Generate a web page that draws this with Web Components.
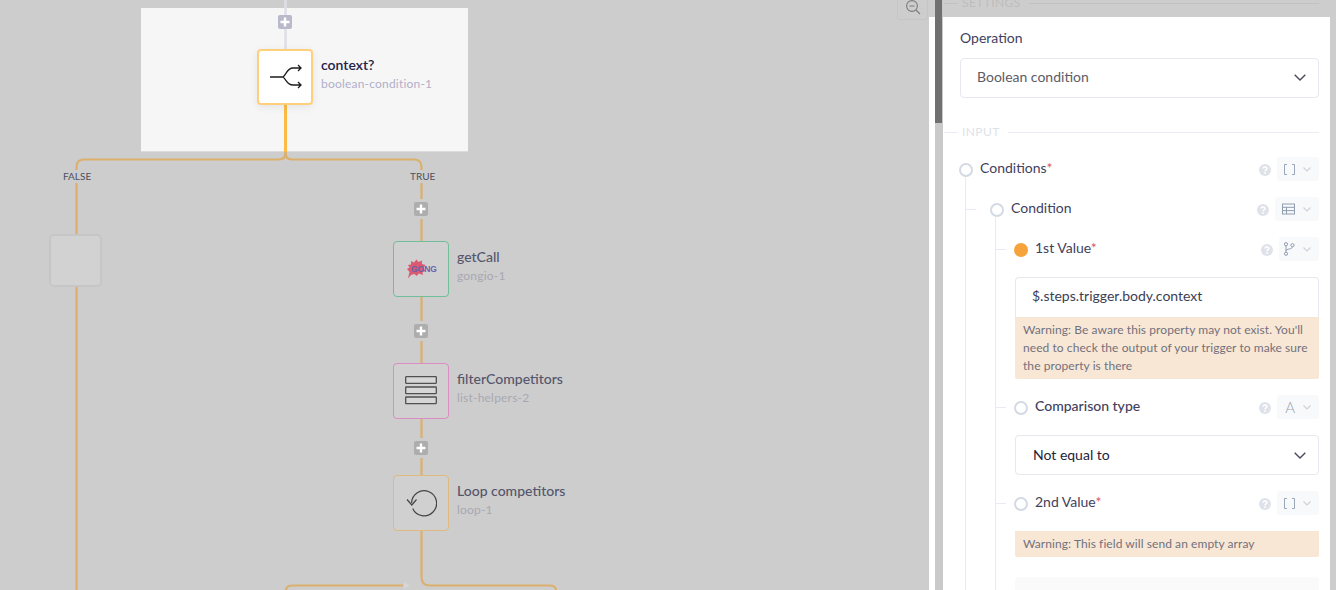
<!DOCTYPE html>
<html><head><meta charset="utf-8"><style>
html,body{margin:0;padding:0;height:100%;overflow:hidden}
body{font-family:"Lato","Noto Sans",sans-serif;background:#cdcdcd}
app-shell{width:1336px;height:590px}
</style></head><body>
<app-shell>
  <flow-canvas slot="canvas">
    <flow-node style="left:257px;top:49px" name="context?" sub="boolean-condition-1" active border="#ffcf7c">
      <svg width="36" height="30" viewBox="0 0 36 30" fill="none" stroke="#1d1d1d" stroke-width="1.3"><path d="M3 15H16M16 15C19 13 20 6 26 6H34M31 3l3 3-3 3M16 15C19 17 20 23 26 23H34M31 20l3 3-3 3"/></svg>
    </flow-node>
    <flow-node style="left:393px;top:241px" name="getCall" sub="gongio-1" border="#70bf99">
      <span style="position:relative;display:block;width:30px;height:20px">
        <svg width="19" height="20" viewBox="0 0 19 20" style="position:absolute;left:1px;top:0"><path d="M1 6L4 5.500 4 2 7 3.500 9.500 .5 11.500 3 15 1.500 15 5 18.500 6 16.500 9 18.500 12 15.500 13 16 16 12 14.500 9.500 17 7.500 15 4 16 1 19.500 2.500 13 0 10 2.500 8.500Z" fill="#db5a73"/></svg>
        <span style="position:absolute;left:5px;top:3px;font:800 8.5px/14px 'Liberation Sans',sans-serif;color:#6a62a8">GONG</span>
      </span>
    </flow-node>
    <flow-node style="left:393px;top:363px" name="filterCompetitors" sub="list-helpers-2" border="#d98dc2">
      <svg width="32" height="30" viewBox="0 0 32 30" fill="#d6d6d6" stroke="#505050" stroke-width="1.3"><rect x=".7" y="0.700" width="30.600" height="6.600" rx=".5"/><rect x="0.700" y="11" width="30.600" height="6.600" rx=".5"/><rect x=".7" y="21" width="30.600" height="6.600" rx=".5"/></svg>
    </flow-node>
    <flow-node style="left:393px;top:475px" name="Loop competitors" sub="loop-1" border="#dfb97e">
      <svg width="32" height="30" viewBox="0 0 32 30" fill="none" stroke="#444" stroke-width="1.2"><path d="M6.600 15A12.500 12.500 0 1 1 7.700 20.400"/><path d="M2 11.500L6.800 17 11.500 11.500"/></svg>
    </flow-node>
    <empty-slot style="left:49px;top:234px"></empty-slot>
    <add-button style="left:278px;top:15px" tone="#b9b9cb"></add-button>
    <add-button style="left:414px;top:202px"></add-button>
    <add-button style="left:414px;top:324px"></add-button>
    <add-button style="left:414px;top:441px"></add-button>
    <branch-label style="left:63px;top:170px">FALSE</branch-label>
    <branch-label style="left:410px;top:170px">TRUE</branch-label>
    <zoom-control style="left:897px;top:-10px"></zoom-control>
  </flow-canvas>

  <side-panel slot="panel">
    <section-title slot="header" dim>SETTINGS</section-title>
    <form-label>Operation</form-label>
    <form-select style="margin-top:10px;color:#5b5b66;padding-bottom:2px">Boolean condition</form-select>
    <section-title style="margin-top:27px">INPUT</section-title>
    <field-row style="margin:18px 0 0 -1px" icon="array" btn="42">Conditions<req-mark></req-mark></field-row>
    <tree-group>
      <field-row tick="-24" icon="table" btn="44">Condition</field-row>
      <tree-group inner>
        <field-row tick="-18" state="on" icon="branch" btn="40" style="margin-left:-1px">1st Value<req-mark></req-mark></field-row>
        <div>
          <form-input>$.steps.trigger.body.context</form-input>
          <warn-box>Warning: Be aware this property may not exist. You'll need to check the output of your trigger to make sure the property is there</warn-box>
        </div>
        <field-row tick="-18" icon="text" btn="42" strong style="margin-left:-1px">Comparison type</field-row>
        <form-select style="color:#22233a;padding-left:17px">Not equal to</form-select>
        <field-row tick="-18" icon="array" btn="42" style="margin-left:-1px">2nd Value<req-mark></req-mark></field-row>
        <warn-box>Warning: This field will send an empty array</warn-box>
        <empty-block style="margin-top:4px"></empty-block>
      </tree-group>
    </tree-group>
  </side-panel>
</app-shell>
<script>
function def(name, html){
  customElements.define(name, class extends HTMLElement{
    constructor(){super();this.attachShadow({mode:'open'});}
    connectedCallback(){
      if(this._done)return;this._done=1;
      this.shadowRoot.innerHTML = typeof html==='function'?html(this):html;
    }
  });
}
def('app-shell',`<style>:host{display:flex;width:1336px;height:590px;overflow:hidden}
::slotted([slot=canvas]){flex:0 0 929px}::slotted([slot=panel]){flex:0 0 407px}</style>
<slot name="canvas"></slot><slot name="panel"></slot>`);

def('flow-canvas',`<style>:host{display:block;position:relative;height:590px;background:#cdcdcd;overflow:visible}
.hl{position:absolute;left:141px;top:8px;width:327px;height:143px;background:#f6f6f6;box-shadow:0 1px 0 #dcdcdc}
svg{position:absolute;left:0;top:0}</style>
<div class="hl"></div>
<svg width="929" height="590" fill="none" stroke-width="2.2" stroke="#dcb06c">
<path d="M285.5 0V15M285.5 29V49" stroke="#dfdfe7" stroke-width="2.6"/>
<path d="M285.500 151V153Q285.500 159.500 279 159.500H84Q76.500 159.500 76.500 167V170M76.500 183V235M76.500 287V590"/>
<path d="M285.500 151V153Q285.500 159.500 292 159.500H414Q421.500 159.500 421.500 167V170M421.500 183V199M421.500 219V241M421.500 297V321M421.500 341V363M421.500 419V438M421.500 458V475M421.500 531V577Q421.500 585.500 430 585.500H549Q556 585.500 556 590"/>
<path d="M286 590Q286 585.500 293 585.500H403"/>
<path d="M285.500 105V152" stroke="#fbbb45" stroke-width="3"/>
<path d="M404 582L410 585.500 404 589Z" fill="#d6d6d6" stroke="none"/>
</svg><slot></slot>`);

def('flow-node', el=>{
  const active=el.hasAttribute('active');
  return `<style>:host{position:absolute;display:flex;gap:8px;align-items:center;white-space:nowrap}
.box{box-sizing:border-box;width:56px;height:56px;display:flex;align-items:center;justify-content:center;border-radius:4px;
 border:${active?2:1}px solid ${el.getAttribute('border')};background:${active?'#fff':'#d0d0d0'};${active?'box-shadow:0 2px 8px rgba(0,0,0,.08);':''}}
.t{margin-top:-7px;display:flex;flex-direction:column}
.n{font-size:14px;line-height:19px;color:${active?'#23234a':'#55566c'};font-weight:${active?600:500}}
.s{font-size:12px;line-height:19px;letter-spacing:.2px;color:${active?'#b1afca':'#a8a8b2'}}</style>
<div class="box"><slot></slot></div><div class="t"><div class="n">${el.getAttribute('name')}</div><div class="s">${el.getAttribute('sub')}</div></div>`});

def('empty-slot',`<style>:host{position:absolute;box-sizing:border-box;width:53px;height:53px;border:2px solid #c6c6c6;border-radius:5px;background:#d2d2d2}</style>`);

def('add-button', el=>`<style>:host{position:absolute;width:14px;height:14px;border-radius:2px;background:${el.getAttribute('tone')||'#adadad'};display:flex}</style>
<svg width="14" height="14" viewBox="0 0 14 14"><path d="M7 2.500V11.500M2.500 7H11.500" stroke="#fff" stroke-width="2.400" fill="none"/></svg>`);

def('branch-label',`<style>:host{position:absolute;font-size:10px;line-height:13px;color:#4f5060}</style><slot></slot>`);

def('zoom-control',`<style>:host{position:absolute;box-sizing:border-box;width:31px;height:30px;border:1px solid #c5c5c5;border-radius:3px;display:block}
svg{position:absolute;left:6px;top:8px}</style>
<svg width="18" height="18" viewBox="0 0 18 18" fill="none" stroke="#7c7c7c" stroke-width="1.1"><circle cx="8" cy="7" r="5.400"/><path d="M5.500 7H10.500M12 11L16 15"/></svg>`);

def('side-panel',`<style>:host{display:block;position:relative;height:590px;background:#cdcdcd;overflow:hidden}
.top{height:17px;overflow:hidden;box-sizing:border-box;padding:0 17px 0 31px}
.top ::slotted(*){margin-top:-4px}
.body{background:#fff;margin-right:6px;height:573px;box-sizing:border-box;padding:11px 11px 0 31px;overflow:hidden}
.track{position:absolute;left:6px;top:0;width:8px;height:590px;background:#c9c9c9}
.thumb{position:absolute;left:6px;top:0;width:7px;height:123px;background:#707070}</style>
<div class="top"><slot name="header"></slot></div>
<div class="body"><slot></slot></div>
<div class="track"></div><div class="thumb"></div>`);

def('section-title', el=>{const d=el.hasAttribute('dim');const c=d?'#c2c2c2':'#e9edf3';
 return `<style>:host{display:flex;align-items:center;margin-left:-16px;height:14px;font-size:12px;letter-spacing:.4px;color:${d?'#bdbdbd':'#dde2e9'}}
 i{height:1px;background:${c}}i.a{width:14px}i.b{flex:1}span{padding:0 8px 0 4px;margin-top:-1px}</style><i class="a"></i><span><slot></slot></span><i class="b"></i>`});

def('form-label',`<style>:host{display:block;font-size:14px;line-height:20px;color:#40425f}</style><slot></slot>`);

def('form-select',`<style>:host{display:flex;align-items:center;box-sizing:border-box;height:40px;border:1px solid #e6e8ee;border-radius:4px;padding:0 12px 0 16px;font-size:14px;background:#fff}
span{flex:1;margin-top:-1px}</style><span><slot></slot></span>
<svg width="12" height="7" viewBox="0 0 12 7" fill="none" stroke="#4a4a5e" stroke-width="1.4"><path d="M.7 .7L6 6 11.300 .7"/></svg>`);

def('form-input',`<style>:host{display:flex;align-items:center;box-sizing:border-box;height:40px;border:1px solid #e6e8ee;border-bottom:0;border-radius:4px 4px 0 0;padding:0 16px 4px;font-size:14px;color:#3c3e52;background:#fff}</style><slot></slot>`);

def('warn-box',`<style>:host{display:block;background:#f9e7d5;border-radius:0 0 2px 2px;padding:4px 8px;font-size:12px;line-height:18px;letter-spacing:.07px;color:#71717d}</style><slot></slot>`);

def('req-mark',`<style>:host{color:#e0555f}</style>*`);

def('empty-block',`<style>:host{display:block;height:60px;background:#fafafa;border-radius:4px}</style>`);

def('tree-group', el=>{const inner=el.hasAttribute('inner');
 return `<style>:host{display:flex;flex-direction:column;gap:16px;border-left:1px solid #e8ebf1;box-sizing:border-box;
 margin-left:5px;padding-left:${inner?19:24}px;margin-top:${inner?-20:-4}px;padding-top:20px}</style><slot></slot>`});

const ICONS={
 array:`<svg width="11" height="11" viewBox="0 0 11 11" fill="none" stroke="#9aa7b8" stroke-width="1"><path d="M3 .5H.5V10.500H3M8 .5H10.500V10.500H8"/></svg>`,
 table:`<svg width="13" height="12" viewBox="0 0 13 12" fill="none" stroke="#8f9db0" stroke-width="1"><rect x=".5" y="1" width="12" height="10"/><path d="M.5 4.300H12.500M.5 7.600H12.500M4.500 4.300V11"/></svg>`,
 branch:`<svg width="12" height="14" viewBox="0 0 12 14" fill="none" stroke="#8f9db0" stroke-width="1"><circle cx="3" cy="2.200" r="1.600"/><circle cx="3" cy="11.800" r="1.600"/><circle cx="9.500" cy="3.200" r="1.600"/><path d="M3 3.800V10.200M3 9C3 6.500 9.500 7.500 9.500 4.800"/></svg>`,
 text:`<span style="font:300 15px/14px Lato,sans-serif;color:#9aa5b4">A</span>`
};
def('field-row', el=>{
 const on=el.getAttribute('state')==='on';
 const tick=el.getAttribute('tick');
 return `<style>:host{display:flex;align-items:center;height:24px;position:relative;font-size:14px;color:#3f415e;${el.hasAttribute('strong')?'font-weight:500;':''}}
 .c{box-sizing:border-box;width:14px;height:14px;border-radius:50%;margin:2px 7px 0 0;flex:none;${on?'background:#f6a33b':'border:2.5px solid #d3dae3'}}
 .l{flex:1;white-space:nowrap;margin-top:-3px}
 .tick{position:absolute;left:${tick}px;width:10px;top:12px;height:1px;background:#e8ebf1}
 .q{margin-right:6px;display:flex;margin-top:1px}
 .b{box-sizing:border-box;width:${el.getAttribute('btn')}px;height:24px;border-radius:3px;background:#f8f9fb;display:flex;align-items:center;justify-content:flex-end;padding-right:8px;gap:8px;flex:none}
 .g{display:flex;justify-content:center}</style>
 ${tick?'<i class="tick"></i>':''}
 <i class="c"></i><span class="l"><slot></slot></span>
 <span class="q"><svg width="12" height="12" viewBox="0 0 12 12"><circle cx="6" cy="6" r="6" fill="#dfe3e9"/><path d="M4.200 4.600C4.200 2.400 7.900 2.400 7.900 4.500 7.900 5.800 6 5.800 6 7.200" fill="none" stroke="#fff" stroke-width="1.500"/><rect x="5.200" y="8.200" width="1.600" height="1.600" fill="#fff"/></svg></span>
 <span class="b"><span class="g">${ICONS[el.getAttribute('icon')]}</span><svg width="8" height="5" viewBox="0 0 8 5" fill="none" stroke="#cdd3db" stroke-width="1.200"><path d="M.5 .5L4 4 7.500 .5"/></svg></span>`});
</script>
</body></html>
